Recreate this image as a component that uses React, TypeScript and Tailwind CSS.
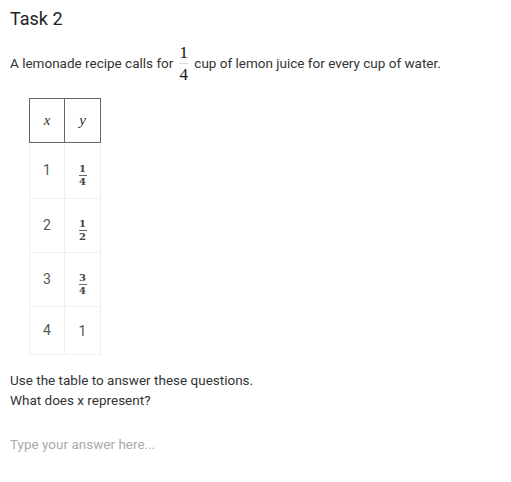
import React from "react";

function Frac({ n, d }: { n: string; d: string }) {
  return (
    <span className="inline-flex flex-col items-center leading-none font-semibold text-[#444]" style={{ fontFamily: '"DejaVu Serif", "Liberation Serif", serif' }}>
      <span className="text-[10px] leading-[10px]">{n}</span>
      <span className="block w-[8px] h-px bg-[#666] my-[1px]" />
      <span className="text-[10px] leading-[10px]">{d}</span>
    </span>
  );
}

const rows: [string, React.ReactNode, string][] = [
  ["1", <Frac n="1" d="4" />, "h-[56px]"],
  ["2", <Frac n="1" d="2" />, "h-[54px]"],
  ["3", <Frac n="3" d="4" />, "h-[54px]"],
  ["4", <span className="text-[14px] text-[#555]">1</span>, "h-[48px]"],
];

export default function App() {
  return (
    <div className="w-[511px] h-[482px] bg-white text-[#222] px-[10px] pt-[7px]" style={{ fontFamily: 'Roboto, "Liberation Sans", sans-serif' }}>
      <h1 className="text-[18px] leading-[24px] text-[#222]">Task 2</h1>
      <p className="mt-[12px] text-[13.5px] text-[#333] flex items-center h-[40px]">
        <span>A lemonade recipe calls for</span>
        <span className="inline-flex flex-col items-center mx-[6px] text-[17px] leading-none text-[#111]" style={{ fontFamily: '"Liberation Serif", serif' }}>
          <span className="leading-[17px]">1</span>
          <span className="block w-[9px] h-px bg-[#ddd] my-[2px]" />
          <span className="leading-[17px]">4</span>
        </span>
        <span>cup of lemon juice for every cup of water.</span>
      </p>
      <table className="mt-[15px] ml-[19px] border-collapse">
        <thead>
          <tr className="h-[44px]">
            <th className="w-[35px] border border-[#666] font-normal text-[15px] italic text-[#333]" style={{ fontFamily: '"Liberation Serif", serif', fontStyle: "italic" }}>x</th>
            <th className="w-[36px] border border-[#666] font-normal text-[15px] italic text-[#333]" style={{ fontFamily: '"Liberation Serif", serif', fontStyle: "italic" }}>y</th>
          </tr>
        </thead>
        <tbody>
          {rows.map(([x, y, h], i) => (
            <tr key={i} className={h}>
              <td className="border border-[#f0f0f0] text-center text-[14px] text-[#555]">{x}</td>
              <td className="border border-[#f0f0f0] text-center">{y}</td>
            </tr>
          ))}
        </tbody>
      </table>
      <p className="mt-[15px] text-[13.5px] leading-[20px] text-[#333]">Use the table to answer these questions.</p>
      <p className="text-[13.5px] leading-[20px] text-[#333]">What does x represent?</p>
      <p className="mt-[24px] text-[13.5px] leading-[20px] text-[#aaa]">Type your answer here...</p>
    </div>
  );
}
